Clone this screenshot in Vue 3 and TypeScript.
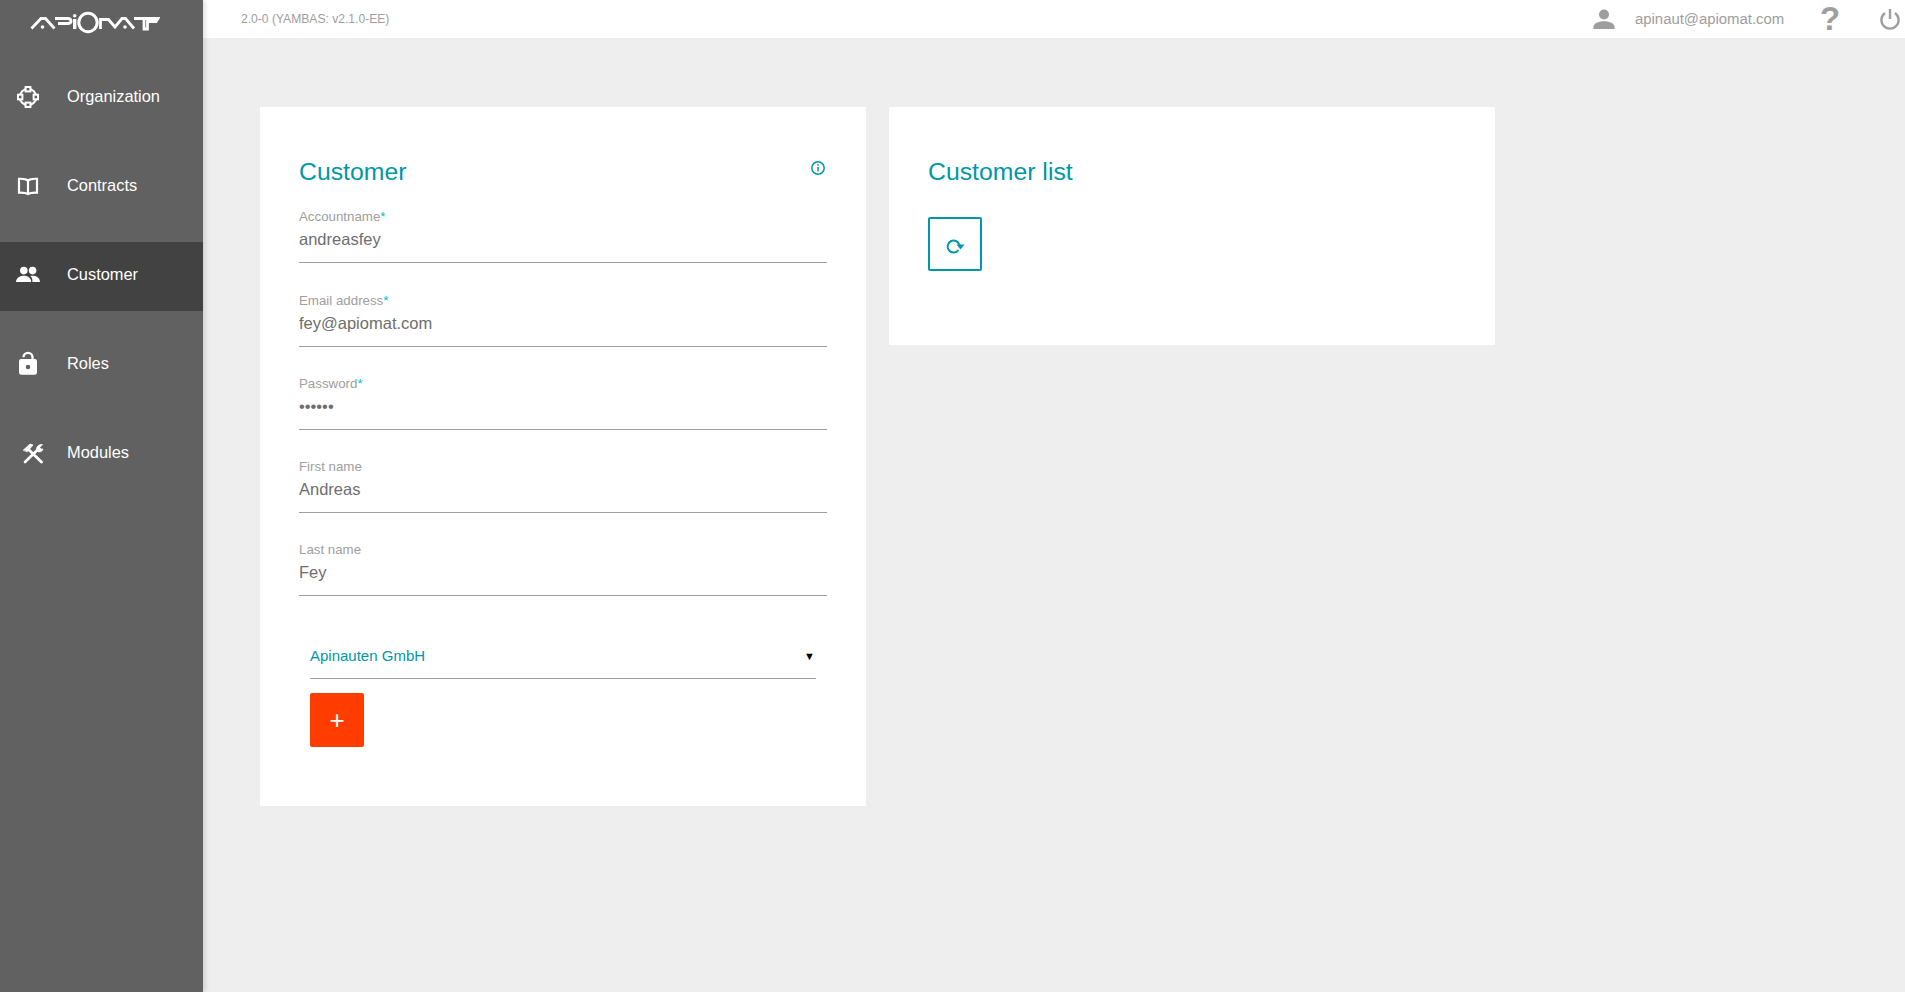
<script setup lang="ts">
const navItems = [
  { label: 'Organization', icon: 'org' },
  { label: 'Contracts', icon: 'book' },
  { label: 'Customer', icon: 'people', active: true },
  { label: 'Roles', icon: 'lock' },
  { label: 'Modules', icon: 'tools' },
]
const fields = [
  { label: 'Accountname', value: 'andreasfey', required: true },
  { label: 'Email address', value: 'fey@apiomat.com', required: true },
  { label: 'Password', value: '••••••', required: true },
  { label: 'First name', value: 'Andreas' },
  { label: 'Last name', value: 'Fey' },
]
</script>

<template>
  <div class="app">
    <aside class="sidebar">
      <div class="logo">
        <svg width="130" height="24" viewBox="0 0 130 24" fill="none" stroke="#fff" stroke-width="2.8">
          <path d="M1.5 17.5 L11 7.5 H15.5 L24.5 17.5" />
          <circle cx="12.5" cy="16" r="1.8" fill="#fff" stroke="none" />
          <path d="M25 7.5 H37.5 Q41 7.5 41 10 Q41 12.5 37.5 12.5 H28" />
          <rect x="43" y="8" width="3.4" height="10" fill="#fff" stroke="none" />
          <circle cx="44.7" cy="4.8" r="1.8" fill="#fff" stroke="none" />
          <circle cx="58" cy="11.5" r="9.2" stroke-width="3" />
          <path d="M70.5 18 V8.5 L78.5 8.5 L85 16 L92 7.5 H95.5 L104 17.5" />
          <circle cx="95" cy="16" r="1.8" fill="#fff" stroke="none" />
          <path d="M104 7.5 H128 L126 10.5 H117.5 V18 H114 V9" />
        </svg>
      </div>
      <nav class="nav">
        <a v-for="item in navItems" :key="item.label" class="nav-item" :class="{ active: item.active }">
          <span class="nav-icon">
            <svg v-if="item.icon === 'org'" width="24" height="24" viewBox="0 0 24 24" fill="none" stroke="#fff" stroke-width="2.1">
              <circle cx="12" cy="12" r="8.2" />
              <rect x="9.6" y="2" width="4.8" height="4.4" fill="#616161" stroke-width="2" />
              <rect x="9.6" y="17.6" width="4.8" height="4.4" fill="#616161" stroke-width="2" />
              <rect x="2" y="9.7" width="4.4" height="4.6" fill="#616161" stroke-width="2" />
              <rect x="17.6" y="9.7" width="4.4" height="4.6" fill="#616161" stroke-width="2" />
            </svg>
            <svg v-else-if="item.icon === 'book'" width="24" height="24" viewBox="0 0 24 24" fill="none" stroke="#fff" stroke-width="2.2">
              <path d="M12 6.5 C10 5 7 4.6 3 4.8 V18.6 C7 18.4 10 18.8 12 20 C14 18.8 17 18.4 21 18.6 V4.8 C17 4.6 14 5 12 6.5 Z M12 6.5 V20" />
            </svg>
            <svg v-else-if="item.icon === 'people'" width="26" height="24" viewBox="0 0 26 24" fill="#fff">
              <circle cx="8.8" cy="7.6" r="3.8" />
              <circle cx="17.6" cy="7.6" r="3.8" />
              <path d="M1 19 C1 14.6 5.5 12.8 8.8 12.8 C12 12.8 16.2 14.6 16.2 19 Z" />
              <path d="M17.4 19 H25 C25 14.6 21 12.8 17.6 12.8 C16.8 12.8 16 12.9 15.3 13.1 C16.8 14.2 17.6 16 17.4 19 Z" />
            </svg>
            <svg v-else-if="item.icon === 'lock'" class="lock" width="27" height="27" viewBox="0 0 24 24">
              <path fill="#fff" d="M18 8h-1V6.5a5 5 0 0 0-10 0h2a3 3 0 0 1 6 0V8H6a2 2 0 0 0-2 2v10a2 2 0 0 0 2 2h12a2 2 0 0 0 2-2V10a2 2 0 0 0-2-2Z" />
              <circle cx="12" cy="15" r="2" fill="#616161" />
            </svg>
            <svg v-else class="tools" width="24" height="24" viewBox="0 0 24 24" fill="none" stroke="#fff" stroke-linecap="round">
              <path d="M4 21 L18 7.5" stroke-width="2.6" />
              <path d="M15.5 9 C15 6 18 3 21.5 3.6 L18.8 6.4 L19.8 8 L22 8.2 C21 10.8 18.4 11.4 16.8 10.6" fill="#fff" stroke-width="0.8" />
              <path d="M6.5 7.5 L20.5 21" stroke-width="2.8" />
              <path d="M2.5 9 L9 3 L12 4 L6.5 10.5 Z" fill="#fff" stroke-width="0.8" />
            </svg>
          </span>
          <span class="nav-label">{{ item.label }}</span>
        </a>
      </nav>
    </aside>

    <div class="main">
      <header class="topbar">
        <span class="version">2.0-0 (YAMBAS: v2.1.0-EE)</span>
        <div class="top-right">
          <svg class="user-icon" width="24" height="24" viewBox="0 0 24 24" fill="#9e9e9e">
            <circle cx="12" cy="7.5" r="5" />
            <path d="M1.5 22 V19.5 C1.5 16 8 14.3 12 14.3 C16 14.3 22.5 16 22.5 19.5 V22 Z" />
          </svg>
          <span class="user-mail">apinaut@apiomat.com</span>
          <span class="help">?</span>
          <svg class="power" width="20" height="22" viewBox="0 0 20 22" fill="none" stroke="#9e9e9e" stroke-width="2.4">
            <path d="M10 1 V11" />
            <path d="M5 5 A8.6 8.6 0 1 0 15 5" />
          </svg>
        </div>
      </header>

      <main class="content">
        <section class="card form-card">
          <div class="card-head">
            <h2>Customer</h2>
            <svg class="info" width="16" height="16" viewBox="0 0 16 16" fill="none" stroke="#0097a7" stroke-width="1.5">
              <circle cx="8" cy="8" r="6.2" />
              <path d="M8 7 V11.5" />
              <circle cx="8" cy="4.9" r="0.9" fill="#0097a7" stroke="none" />
            </svg>
          </div>
          <div v-for="f in fields" :key="f.label" class="field">
            <label>{{ f.label }}<span v-if="f.required" class="req">*</span></label>
            <div class="value">{{ f.value }}</div>
          </div>
          <div class="select-wrap">
            <div class="select">
              <span>Apinauten GmbH</span>
              <span class="arrow">▼</span>
            </div>
            <button class="add" type="button">+</button>
          </div>
        </section>

        <section class="card list-card">
          <h2>Customer list</h2>
          <button class="refresh" type="button">
            <svg width="20" height="20" viewBox="0 0 20 20" fill="none" stroke="#0097a7" stroke-width="2">
              <path d="M14.4 9 A6 6 0 1 0 13.5 14" />
              <path d="M11.5 8.5 H19.5 L15.5 13.5 Z" fill="#0097a7" stroke="none" />
            </svg>
          </button>
        </section>
      </main>
    </div>
  </div>
</template>

<style>
html, body { margin: 0; padding: 0; background: #eee; }
</style>

<style scoped>
.app {
  display: flex;
  width: 1905px;
  height: 992px;
  overflow: hidden;
  background: #eeeeee;
  font-family: "Liberation Sans", Arial, sans-serif;
}
.sidebar {
  width: 203px;
  flex: none;
  background: #616161;
  box-shadow: 2px 0 5px rgba(0, 0, 0, 0.14);
  position: relative;
  z-index: 2;
}
.logo { height: 64px; box-sizing: border-box; padding-top: 11px; padding-left: 30px; }
.logo svg { display: block; }
.nav { display: flex; flex-direction: column; gap: 20px; }
.nav-item {
  height: 69px;
  display: flex;
  align-items: center;
  color: #fff;
  font-size: 16.4px;
  padding-bottom: 4px;
  box-sizing: border-box;
}
.nav-item.active { background: #424242; }
.nav-icon { width: 67px; flex: none; display: flex; justify-content: center; padding-right: 11px; box-sizing: border-box; }
.nav-icon svg { display: block; }
.nav-icon .tools { transform: translateX(5px); }
.nav-icon .lock { transform: translateX(-0.5px); }
.main { flex: 1; min-width: 0; display: flex; flex-direction: column; }
.topbar {
  height: 38px;
  flex: none;
  background: #fff;
  display: flex;
  align-items: center;
  justify-content: space-between;
  padding-left: 38px;
}
.version { font-size: 12.1px; color: #9e9e9e; }
.top-right { display: flex; align-items: center; color: #9e9e9e; }
.user-icon { margin-right: 19px; }
.user-mail { font-size: 14.9px; width: 149px; white-space: nowrap; margin-right: 36px; }
.help { font-size: 33px; font-weight: 700; line-height: 38px; width: 20px; text-align: center; margin-right: 40px; }
.power { margin-right: 5px; }
.content { display: flex; align-items: flex-start; gap: 23px; padding: 69px 0 0 57px; }
.card { width: 606px; box-sizing: border-box; background: #fff; padding: 51px 39px 0; }
.form-card { height: 699px; }
.list-card { height: 238px; }
.card-head { display: flex; justify-content: space-between; align-items: flex-start; margin-bottom: 21px; }
h2 { margin: 0; font-size: 24.8px; font-weight: 400; line-height: 28px; color: #0097a7; }
.info { margin: 2px 1px 0 0; }
.field { height: 83px; }
.field:nth-child(2) { height: 84px; }
.field label { display: block; font-size: 13.3px; line-height: 15px; padding-top: 2px; color: #9e9e9e; }
.req { color: #00bcd4; }
.value {
  font-size: 16.5px;
  line-height: 19px;
  padding: 6px 0 13px;
  color: #6e6e6e;
  border-bottom: 1px solid #9e9e9e;
}
.select-wrap { padding: 0 11px; }
.select {
  display: flex;
  justify-content: space-between;
  align-items: center;
  height: 56px;
  padding: 10px 1px 0 0;
  box-sizing: border-box;
  border-bottom: 1px solid #9e9e9e;
  font-size: 15px;
  color: #0097a7;
}
.arrow { font-size: 11px; color: #000; }
.add {
  display: block;
  margin-top: 14px;
  width: 54px;
  height: 54px;
  border: 0;
  border-radius: 2px;
  background: #ff3d00;
  color: #fff;
  font: 400 26px/54px "Liberation Sans", sans-serif;
  padding: 0;
}
.refresh {
  margin-top: 31px;
  width: 54px;
  height: 54px;
  border: 2px solid #0097a7;
  border-radius: 2px;
  background: #fff;
  display: flex;
  align-items: center;
  justify-content: center;
  padding: 4px 0 0;
  box-sizing: border-box;
}
</style>
